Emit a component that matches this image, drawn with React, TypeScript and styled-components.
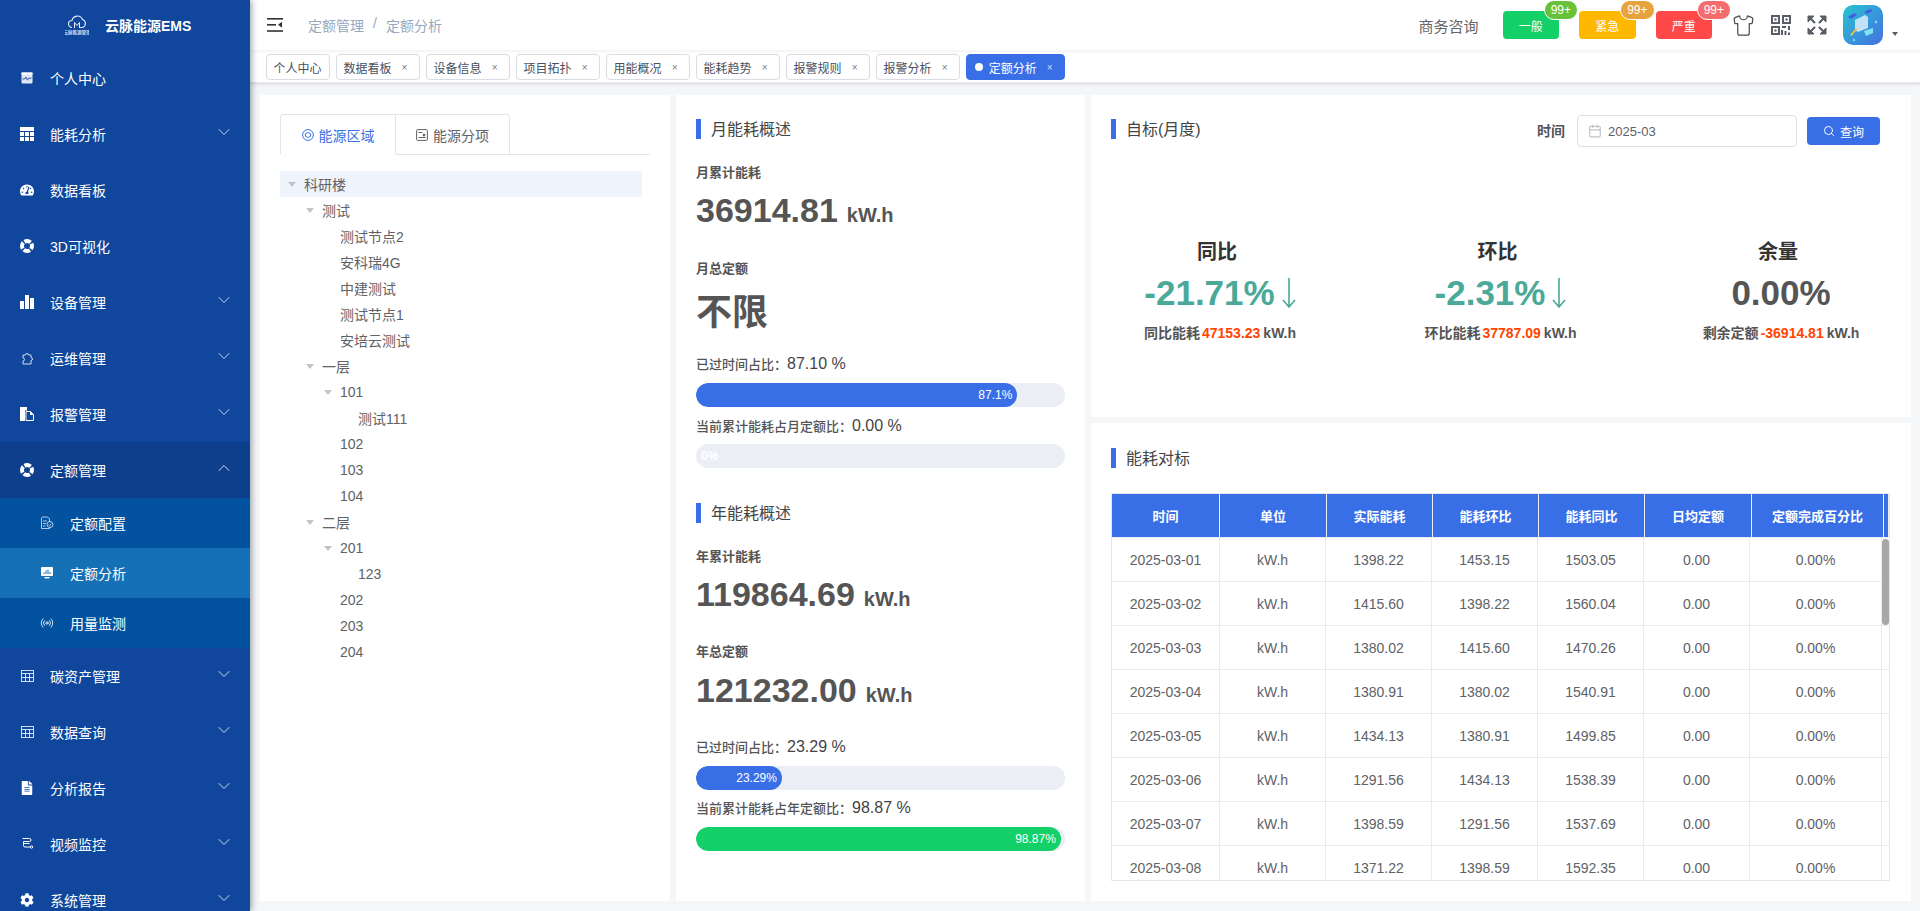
import React from "react";
import styled, { createGlobalStyle } from "styled-components";
import { Calendar, ChevronDown, ChevronUp, Radio, Search, Shirt } from "lucide-react";
import { FaCog, FaFileAlt, FaTachometerAlt } from "react-icons/fa";

const BLUE = "#386fe7";

const GlobalStyle = createGlobalStyle`
  html, body, #root { margin: 0; padding: 0; width: 100%; height: 100%; }
  body {
    overflow: hidden;
    background: #f5f6f7;
    font-family: "Liberation Sans", "Noto Sans CJK SC", sans-serif;
    font-size: 14px;
    color: #606266;
  }
  * { box-sizing: border-box; }
`;

const Layout = styled.div`
  display: flex;
  width: 1920px;
  height: 911px;
  overflow: hidden;
`;

/* sidebar */
const Sidebar = styled.aside`
  flex: 0 0 250px;
  height: 911px;
  overflow: hidden;
  background: #10469b;
  color: #fff;
  box-shadow: 2px 0 6px rgba(0, 21, 41, 0.35);
  position: relative;
  z-index: 2;
`;
const LogoRow = styled.div`
  display: flex;
  align-items: center;
  height: 50px;
  padding-left: 65px;
  font-weight: 700;
  font-size: 14px;
  gap: 16px;
`;
const NavRow = styled.div<{ $open?: boolean }>`
  display: flex;
  align-items: center;
  height: 56px;
  padding: 0 20px;
  background: ${(p) => (p.$open ? "#0e3f8d" : "transparent")};
`;
const SubRow = styled.div<{ $active?: boolean }>`
  display: flex;
  align-items: center;
  height: 50px;
  padding-left: 40px;
  background: ${(p) => (p.$active ? "#1570b5" : "#03529f")};
`;
const NavIcon = styled.span`
  flex: 0 0 14px;
  width: 14px;
  height: 14px;
  margin-right: 16px;
  display: flex;
  align-items: center;
  justify-content: center;
  color: #fff;
`;
const NavText = styled.span`
  flex: 1;
  font-size: 14px;
`;
const NavArrow = styled.span`
  display: flex;
  margin-top: -4px;
  margin-right: -4px;
  color: #cfdaec;
`;

/* right side */
const Main = styled.div`
  flex: 1;
  min-width: 0;
  display: flex;
  flex-direction: column;
`;
const Header = styled.header`
  display: flex;
  align-items: center;
  height: 50px;
  padding: 0 20px 0 17px;
  background: #fff;
  box-shadow: 0 1px 4px rgba(0, 21, 41, 0.08);
  position: relative;
  z-index: 1;
`;
const Crumbs = styled.div`
  display: flex;
  gap: 9px;
  margin-left: 25px;
  color: #97a8be;
  font-size: 14px;
`;
const Tools = styled.div`
  margin-left: auto;
  display: flex;
  align-items: center;
`;
const Consult = styled.span`
  font-size: 15px;
  color: #666;
  margin-right: 24px;
`;
const LevelBtn = styled.div<{ $bg: string }>`
  position: relative;
  width: 56.5px;
  height: 28px;
  margin-right: 20px;
  border-radius: 4px;
  background: ${(p) => p.$bg};
  color: #fff;
  font-size: 12px;
  display: flex;
  align-items: center;
  justify-content: center;
`;
const Badge = styled.span<{ $bg: string }>`
  position: absolute;
  top: -11px;
  right: -19px;
  height: 20px;
  padding: 0 6px;
  border-radius: 10px;
  border: 1px solid #fff;
  background: ${(p) => p.$bg};
  color: #fff;
  font-size: 12px;
  line-height: 18px;
  white-space: nowrap;
`;
const ToolIcon = styled.span`
  display: flex;
  margin-right: 16px;
  color: #4a4e55;
`;
const Avatar = styled.div`
  width: 40px;
  height: 40px;
  border-radius: 10px;
  overflow: hidden;
`;
const Caret = styled.span`
  margin: 18px 2px 0 9px;
  width: 0;
  height: 0;
  border-left: 3.5px solid transparent;
  border-right: 3.5px solid transparent;
  border-top: 4px solid #5a5e66;
`;
const TagBar = styled.div`
  display: flex;
  align-items: flex-start;
  gap: 6px;
  height: 33px;
  padding: 4px 0 0 15.5px;
  background: #fff;
  border-bottom: 1px solid #e6e8ec;
  box-shadow: 0 1px 3px rgba(0, 0, 0, 0.12);
`;
const Tag = styled.div<{ $active?: boolean }>`
  display: flex;
  align-items: center;
  height: 26px;
  padding: 0 7px;
  font-size: 12px;
  border-radius: 4px;
  border: 1px solid ${(p) => (p.$active ? BLUE : "#d8dce5")};
  background: ${(p) => (p.$active ? BLUE : "#fff")};
  color: ${(p) => (p.$active ? "#fff" : "#495060")};
`;
const TagDot = styled.span`
  width: 8px;
  height: 8px;
  border-radius: 50%;
  background: #fff;
  margin: 0 6px 0 1px;
`;
const TagClose = styled.span`
  width: 14px;
  margin-left: 6px;
  text-align: center;
  font-size: 10px;
  opacity: 0.75;
`;
const Content = styled.main`
  flex: 1;
  min-height: 0;
  display: grid;
  grid-template-columns: 410px 409px 819px;
  gap: 6px;
  padding: 12px 10px 10px;
`;
const Panel = styled.section`
  background: #fff;
  min-height: 0;
`;
const TreePanel = styled(Panel)`
  padding: 19px 20px;
`;
const OverviewPanel = styled(Panel)`
  padding: 24px 20px 0;
`;
const RightColumn = styled.div`
  display: grid;
  grid-template-rows: 322px 478px;
  gap: 6px;
  min-height: 0;
`;

/* tree */
const TabHead = styled.div`
  display: flex;
  height: 41px;
  border-bottom: 1px solid #dfe4ed;
`;
const Tab = styled.div<{ $active?: boolean; $w: number }>`
  width: ${(p) => p.$w}px;
  height: 41px;
  display: flex;
  align-items: center;
  justify-content: center;
  gap: 5px;
  font-size: 14px;
  color: ${(p) => (p.$active ? BLUE : "#606266")};
  background: #fff;
  border: 1px solid #dfe4ed;
  border-left-width: ${(p) => (p.$active ? 1 : 0)}px;
  border-bottom-color: ${(p) => (p.$active ? "#fff" : "#dfe4ed")};
  border-radius: ${(p) => (p.$active ? "4px 0 0 0" : "0 4px 0 0")};
`;
const Tree = styled.div`
  width: 362px;
  margin-top: 16px;
`;
const TreeRow = styled.div<{ $level: number; $selected?: boolean }>`
  display: flex;
  align-items: center;
  height: 26px;
  padding-left: ${(p) => p.$level * 18}px;
  background: ${(p) => (p.$selected ? "#f0f4fc" : "transparent")};
  color: #606266;
  font-size: 14px;
`;
const TreeArrow = styled.span<{ $hidden?: boolean }>`
  flex: 0 0 24px;
  display: flex;
  justify-content: center;
  &::before {
    content: "";
    display: ${(p) => (p.$hidden ? "none" : "block")};
    border-left: 4px solid transparent;
    border-right: 4px solid transparent;
    border-top: 5px solid #c0c4cc;
  }
`;

/* overview */
const Title = styled.h3<{ $mt?: number }>`
  display: flex;
  align-items: center;
  height: 20px;
  margin: ${(p) => p.$mt ?? 0}px 0 0;
  padding: 0 0 2px 10px;
  border-left: 5px solid ${BLUE};
  font-size: 16px;
  font-weight: 400;
  color: #444;
`;
const StatLabel = styled.div<{ $mt: number; $light?: boolean }>`
  height: 20px;
  line-height: 20px;
  margin-top: ${(p) => p.$mt}px;
  font-size: 13px;
  font-weight: ${(p) => (p.$light ? 500 : 700)};
  color: #555;
`;
const BigValue = styled.div<{ $mt: number; $h?: number; $size?: number }>`
  height: ${(p) => p.$h ?? 44}px;
  line-height: ${(p) => p.$h ?? 44}px;
  margin-top: ${(p) => p.$mt}px;
  font-size: ${(p) => p.$size ?? 34}px;
  font-weight: 700;
  color: #555;
`;
const Unit = styled.span`
  font-size: 20px;
  margin-left: 9px;
`;
const RatioNum = styled.span`
  font-size: 16px;
  font-weight: 400;
  color: #444;
`;
const Track = styled.div<{ $mt: number }>`
  height: 24px;
  margin-top: ${(p) => p.$mt}px;
  border-radius: 12px;
  background: #ebeef5;
  overflow: hidden;
`;
const Fill = styled.div<{ $color: string }>`
  height: 100%;
  border-radius: 12px;
  background: ${(p) => p.$color};
  color: #fff;
  font-size: 12px;
  line-height: 24px;
  text-align: right;
  padding-right: 5px;
  white-space: nowrap;
`;
const ZeroText = styled.div`
  padding-left: 5px;
  color: #fff;
  font-size: 12px;
  font-weight: 700;
  line-height: 24px;
`;

/* target */
const TargetHead = styled.div`
  display: flex;
  align-items: flex-start;
  height: 52px;
  padding: 20px 31px 0 20px;
`;
const TargetTitle = styled(Title)`
  margin-top: 4px;
  flex: 1;
`;
const TimeLabel = styled.span`
  font-size: 14px;
  font-weight: 700;
  color: #555;
  line-height: 32px;
  margin-right: 12px;
`;
const DateInput = styled.div`
  display: flex;
  align-items: center;
  width: 220px;
  height: 32px;
  padding-left: 10px;
  gap: 6px;
  border: 1px solid #dcdfe6;
  border-radius: 4px;
  font-size: 13px;
  color: #606266;
`;
const QueryButton = styled.div`
  display: flex;
  align-items: center;
  justify-content: center;
  gap: 5px;
  width: 73px;
  height: 28px;
  margin: 2px 0 0 10px;
  border-radius: 4px;
  background: ${BLUE};
  color: #fff;
  font-size: 12px;
`;
const TargetGrid = styled.div`
  display: grid;
  grid-template-columns: repeat(3, 240px);
  column-gap: 40.5px;
  margin: 90px 0 0 9px;
`;
const TargetCol = styled.div`
  display: flex;
  flex-direction: column;
  align-items: center;
`;
const TargetName = styled.div`
  height: 28px;
  line-height: 28px;
  margin-top: 1px;
  padding-right: 6px;
  font-size: 20px;
  font-weight: 700;
  color: #333;
`;
const TargetValue = styled.div<{ $color: string }>`
  display: flex;
  align-items: center;
  gap: 7px;
  height: 44px;
  margin-top: 5px;
  font-size: 35px;
  font-weight: 700;
  color: ${(p) => p.$color};
`;
const TargetSub = styled.div`
  height: 20px;
  line-height: 20px;
  margin-top: 8px;
  font-size: 14px;
  font-weight: 700;
  color: #555;
  white-space: nowrap;
`;
const Orange = styled.span`
  color: #ff4500;
  margin: 0 3px 0 2px;
`;

/* table */
const TablePanel = styled(Panel)`
  padding: 25px 21px 0 20px;
`;
const TableBox = styled.div`
  width: 779px;
  height: 388px;
  margin-top: 25px;
  border: 1px solid #e4e7ed;
`;
const HeadRow = styled.div`
  display: grid;
  grid-template-columns: 108px 107px 106px 106px 106px 107px 132px 1fr;
  height: 44px;
  background: ${BLUE};
  border-bottom: 1px solid #ebeef5;
`;
const HeadCell = styled.div`
  display: flex;
  align-items: center;
  justify-content: center;
  border-right: 1px solid #ebeef5;
  color: #fff;
  font-size: 13px;
  font-weight: 700;
`;
const TableBody = styled.div`
  position: relative;
  height: 342px;
  overflow: hidden;
`;
const ScrollThumb = styled.div`
  position: absolute;
  top: 1px;
  right: 0;
  width: 7px;
  height: 86px;
  border-radius: 4px;
  background: #a8a8a8;
`;
const BodyRow = styled.div`
  display: grid;
  grid-template-columns: 108px 106px 106px 106px 106px 106px 132px;
  height: 44px;
  border-bottom: 1px solid #e8ebf1;
`;
const BodyCell = styled.div`
  display: flex;
  align-items: center;
  justify-content: center;
  border-right: 1px solid #e8ebf1;
  color: #606266;
  font-size: 14px;
`;

/* drawn icons */
const PulseIcon = () => (
  <svg width="12" height="12" viewBox="0 0 12 12">
    <rect x="0.5" y="0.5" width="11" height="11" rx="1" fill="#dfe7f5" />
    <rect x="0.5" y="0.5" width="11" height="2" fill="#fff" />
    <path d="M1.5 7h2.2l1.2-2 1.6 3.2 1.3-2H10.5" fill="none" stroke="#10469b" strokeWidth="0.9" />
  </svg>
);
const GridIcon = () => (
  <svg width="14" height="14" viewBox="0 0 14 14" fill="#fff">
    <rect x="0" y="0" width="14" height="4" />
    <rect x="0" y="5" width="4" height="4" />
    <rect x="5" y="5" width="4" height="4" />
    <rect x="10" y="5" width="4" height="4" />
    <rect x="0" y="10" width="4" height="4" />
    <rect x="5" y="10" width="4" height="4" />
    <rect x="10" y="10" width="4" height="4" />
  </svg>
);
const RingIcon = () => (
  <svg width="14" height="14" viewBox="0 0 14 14" fill="none">
    <circle cx="7" cy="7" r="5" stroke="#fff" strokeWidth="4" strokeDasharray="6.45 1.4" strokeDashoffset="3.22" />
  </svg>
);
const BarsIcon = () => (
  <svg width="14" height="14" viewBox="0 0 14 14" fill="#fff">
    <rect x="0" y="6" width="4" height="8" />
    <rect x="5" y="0" width="4" height="14" />
    <rect x="10" y="3" width="4" height="11" />
  </svg>
);
const PuzzleIcon = () => (
  <svg width="13" height="13" viewBox="0 0 13 13" fill="none" stroke="#e8eef8" strokeWidth="0.9">
    <path d="M2 3h2.5a1.5 1.5 0 0 1 3 0H10v2.5a1.5 1.5 0 0 1 0 3V12H2V9a1.5 1.5 0 0 0 0-3z" />
  </svg>
);
const DocsIcon = () => (
  <svg width="14" height="14" viewBox="0 0 14 14">
    <path d="M0 0h7v3.5H5V14H0z" fill="#fff" />
    <path d="M6 4.500h4.500L13.500 7.500v6H6z" fill="none" stroke="#fff" strokeWidth="1" />
    <path d="M10 4.500V8h3.500" fill="#fff" />
  </svg>
);
const DocCheckIcon = () => (
  <svg width="14" height="14" viewBox="0 0 14 14" fill="none" stroke="#e3ebf7" strokeWidth="0.8">
    <path d="M2.500 1h5l2 2v3M9.500 11.500v1h-8V2L2.500 1" />
    <path d="M3 5h4M3 7.500h3M3 10h2.500" />
    <circle cx="10" cy="8.500" r="3" />
    <path d="M8.700 8.500l1 1 1.600-1.800" />
  </svg>
);
const MonitorIcon = () => (
  <svg width="14" height="14" viewBox="0 0 14 14">
    <rect x="1" y="1" width="12" height="9" rx="0.8" fill="#fff" />
    <path d="M4 8V6.500M6 8V4.500M8 8V3.500M10 8V6" stroke="#1570b5" strokeWidth="1" />
    <rect x="4.500" y="11" width="5" height="1.400" fill="#fff" />
  </svg>
);
const TableIcon = () => (
  <svg width="13" height="12" viewBox="0 0 13 12" fill="none" stroke="#e8eef8" strokeWidth="0.9">
    <rect x="0.500" y="0.500" width="12" height="11" />
    <path d="M0.500 3.500h12M0.500 7.500h12M4.500 3.500v8M8.500 3.500v8" />
  </svg>
);
const BranchIcon = () => (
  <svg width="14" height="14" viewBox="0 0 14 14" fill="none" stroke="#fff" strokeWidth="1">
    <path d="M2.500 1.500h7a1.500 1.500 0 0 1 0 3h-6v4a1.500 1.500 0 0 0 1.500 1.500h5" />
    <path d="M3.500 6.500h6" />
    <circle cx="11.500" cy="10" r="1.200" />
  </svg>
);
const MenuToggle = () => (
  <svg width="16" height="14" viewBox="0 0 16 14" fill="#333">
    <rect x="0" y="0" width="16" height="1.600" />
    <rect x="0" y="6" width="9" height="1.600" />
    <rect x="0" y="12.200" width="16" height="1.600" />
    <path d="M11 6.800l4-3v6z" />
  </svg>
);
const QrIcon = () => (
  <svg width="20" height="20" viewBox="0 0 20 20" fill="none" stroke="#5a5e66" strokeWidth="2">
    <rect x="1" y="1" width="7" height="7" />
    <rect x="12" y="1" width="7" height="7" />
    <rect x="1" y="12" width="7" height="7" />
    <rect x="3.800" y="3.800" width="1.400" height="1.400" fill="#5a5e66" strokeWidth="0.6" />
    <rect x="14.800" y="3.800" width="1.400" height="1.400" fill="#5a5e66" strokeWidth="0.6" />
    <rect x="3.800" y="14.800" width="1.400" height="1.400" fill="#5a5e66" strokeWidth="0.6" />
    <path d="M11 12h4M18 11v4M11 15v5M14.500 16v4M18 17.500V20" />
  </svg>
);
const FullIcon = () => (
  <svg width="20" height="20" viewBox="0 0 20 20" fill="#5a5e66" stroke="#5a5e66">
    <path d="M1 1h6L1 7z" />
    <path d="M19 1h-6l6 6z" />
    <path d="M1 19h6l-6-6z" />
    <path d="M19 19h-6l6-6z" />
    <path d="M3 3l5 5M17 3l-5 5M3 17l5-5M17 17l-5-5" strokeWidth="2.200" />
  </svg>
);
const AvatarArt = () => (
  <svg width="40" height="40" viewBox="0 0 40 40">
    <defs>
      <linearGradient id="avatarBg" x1="0" y1="0" x2="1" y2="1">
        <stop offset="0" stopColor="#28c4cf" />
        <stop offset="1" stopColor="#4470e2" />
      </linearGradient>
    </defs>
    <rect width="40" height="40" fill="url(#avatarBg)" />
    <path d="M5 12l6-4 3 2-6 4zM21 7l6-3 3 2-6 3z" fill="#3f5ee0" />
    <path d="M12 15l10-5 3 2v11l-10 4-3-2z" fill="#cfe9fb" opacity="0.9" />
    <path d="M7 30l6-7 1.500 1-6 7z" fill="#f3c34a" />
    <path d="M21 26l9-3v5l-7 3z" fill="#7fe3ee" />
    <circle cx="11" cy="35" r="1.200" fill="#7fe3ee" />
    <circle cx="33" cy="17" r="1.200" fill="#9fd0ff" />
  </svg>
);
const LogoIcon = () => (
  <svg width="24" height="24" viewBox="0 0 24 24">
    <path
      d="M7 14.500a3.500 3.500 0 0 1 0-7 5.500 5.500 0 0 1 10.500-1 4.200 4.200 0 0 1 0 8h-3.500"
      fill="none"
      stroke="#e8eef8"
      strokeWidth="1.100"
    />
    <path d="M9.500 15V9.500l2.500 3 2.500-3V15" fill="none" stroke="#e8eef8" strokeWidth="1" />
    <text x="12" y="21" textAnchor="middle" fontSize="4.500" fill="#cdd9ee">
      云脉能源管理
    </text>
  </svg>
);
const RingTabIcon = () => (
  <svg width="12" height="12" viewBox="0 0 12 12" fill="none" stroke="currentColor" strokeWidth="1">
    <circle cx="6" cy="6" r="5.400" />
    <rect x="3.200" y="3.800" width="5.600" height="4.400" rx="2.200" />
  </svg>
);
const PictureTabIcon = () => (
  <svg width="12" height="12" viewBox="0 0 12 12" fill="none" stroke="currentColor" strokeWidth="1">
    <rect x="0.600" y="0.600" width="10.800" height="10.800" rx="1" />
    <path d="M2.500 3.500h4M2.500 8.500h7" />
    <circle cx="8" cy="6" r="1" fill="currentColor" />
  </svg>
);
const DownArrow = () => (
  <svg width="14" height="30" viewBox="0 0 14 30" fill="none" stroke="#4aa998" strokeWidth="1.600">
    <path d="M7 0v29M1 22l6 7 6-7" />
  </svg>
);

const menuBefore = [
  { label: "个人中心", icon: <PulseIcon /> },
  { label: "能耗分析", icon: <GridIcon />, arrow: true },
  { label: "数据看板", icon: <FaTachometerAlt size={14} /> },
  { label: "3D可视化", icon: <RingIcon /> },
  { label: "设备管理", icon: <BarsIcon />, arrow: true },
  { label: "运维管理", icon: <PuzzleIcon />, arrow: true },
  { label: "报警管理", icon: <DocsIcon />, arrow: true },
];
const subMenu = [
  { label: "定额配置", icon: <DocCheckIcon /> },
  { label: "定额分析", icon: <MonitorIcon />, active: true },
  { label: "用量监测", icon: <Radio size={14} strokeWidth={1.4} /> },
];
const menuAfter = [
  { label: "碳资产管理", icon: <TableIcon /> },
  { label: "数据查询", icon: <TableIcon /> },
  { label: "分析报告", icon: <FaFileAlt size={14} /> },
  { label: "视频监控", icon: <BranchIcon /> },
  { label: "系统管理", icon: <FaCog size={14} /> },
];
const tags = ["数据看板", "设备信息", "项目拓扑", "用能概况", "能耗趋势", "报警规则", "报警分析"];
const treeData: { label: string; level: number; leaf?: boolean; selected?: boolean }[] = [
  { label: "科研楼", level: 0, selected: true },
  { label: "测试", level: 1 },
  { label: "测试节点2", level: 2, leaf: true },
  { label: "安科瑞4G", level: 2, leaf: true },
  { label: "中建测试", level: 2, leaf: true },
  { label: "测试节点1", level: 2, leaf: true },
  { label: "安培云测试", level: 2, leaf: true },
  { label: "一层", level: 1 },
  { label: "101", level: 2 },
  { label: "测试111", level: 3, leaf: true },
  { label: "102", level: 2, leaf: true },
  { label: "103", level: 2, leaf: true },
  { label: "104", level: 2, leaf: true },
  { label: "二层", level: 1 },
  { label: "201", level: 2 },
  { label: "123", level: 3, leaf: true },
  { label: "202", level: 2, leaf: true },
  { label: "203", level: 2, leaf: true },
  { label: "204", level: 2, leaf: true },
];
const heads = ["时间", "单位", "实际能耗", "能耗环比", "能耗同比", "日均定额", "定额完成百分比", ""];
const rows = [
  ["2025-03-01", "1398.22", "1453.15", "1503.05"],
  ["2025-03-02", "1415.60", "1398.22", "1560.04"],
  ["2025-03-03", "1380.02", "1415.60", "1470.26"],
  ["2025-03-04", "1380.91", "1380.02", "1540.91"],
  ["2025-03-05", "1434.13", "1380.91", "1499.85"],
  ["2025-03-06", "1291.56", "1434.13", "1538.39"],
  ["2025-03-07", "1398.59", "1291.56", "1537.69"],
  ["2025-03-08", "1371.22", "1398.59", "1592.35"],
];

function App() {
  return (
    <Layout>
      <GlobalStyle />
      <Sidebar>
        <LogoRow>
          <LogoIcon />
          <span>云脉能源EMS</span>
        </LogoRow>
        {menuBefore.map((m) => (
          <NavRow key={m.label}>
            <NavIcon>{m.icon}</NavIcon>
            <NavText>{m.label}</NavText>
            {m.arrow && (
              <NavArrow>
                <ChevronDown size={20} strokeWidth={1.2} />
              </NavArrow>
            )}
          </NavRow>
        ))}
        <NavRow $open>
          <NavIcon>
            <RingIcon />
          </NavIcon>
          <NavText>定额管理</NavText>
          <NavArrow>
            <ChevronUp size={20} strokeWidth={1.2} />
          </NavArrow>
        </NavRow>
        {subMenu.map((m) => (
          <SubRow key={m.label} $active={m.active}>
            <NavIcon>{m.icon}</NavIcon>
            <NavText>{m.label}</NavText>
          </SubRow>
        ))}
        {menuAfter.map((m) => (
          <NavRow key={m.label}>
            <NavIcon>{m.icon}</NavIcon>
            <NavText>{m.label}</NavText>
            <NavArrow>
              <ChevronDown size={20} strokeWidth={1.2} />
            </NavArrow>
          </NavRow>
        ))}
      </Sidebar>
      <Main>
        <Header>
          <MenuToggle />
          <Crumbs>
            <span>定额管理</span>
            <span>/</span>
            <span>定额分析</span>
          </Crumbs>
          <Tools>
            <Consult>商务咨询</Consult>
            <LevelBtn $bg="#13d168">
              一般<Badge $bg="#67c23a">99+</Badge>
            </LevelBtn>
            <LevelBtn $bg="#ffb800">
              紧急<Badge $bg="#e6a23c">99+</Badge>
            </LevelBtn>
            <LevelBtn $bg="#ff4949">
              严重<Badge $bg="#f56c6c">99+</Badge>
            </LevelBtn>
            <ToolIcon>
              <Shirt size={23} strokeWidth={1.3} />
            </ToolIcon>
            <ToolIcon>
              <QrIcon />
            </ToolIcon>
            <ToolIcon>
              <FullIcon />
            </ToolIcon>
            <Avatar>
              <AvatarArt />
            </Avatar>
            <Caret />
          </Tools>
        </Header>
        <TagBar>
          <Tag>个人中心</Tag>
          {tags.map((t) => (
            <Tag key={t}>
              {t}
              <TagClose>×</TagClose>
            </Tag>
          ))}
          <Tag $active>
            <TagDot />
            定额分析
            <TagClose>×</TagClose>
          </Tag>
        </TagBar>
        <Content>
          <TreePanel>
            <TabHead>
              <Tab $active $w={116}>
                <RingTabIcon />
                能源区域
              </Tab>
              <Tab $w={114}>
                <PictureTabIcon />
                能源分项
              </Tab>
            </TabHead>
            <Tree>
              {treeData.map((n) => (
                <TreeRow key={n.label} $level={n.level} $selected={n.selected}>
                  <TreeArrow $hidden={n.leaf} />
                  {n.label}
                </TreeRow>
              ))}
            </Tree>
          </TreePanel>
          <OverviewPanel>
            <Title>月能耗概述</Title>
            <StatLabel $mt={24}>月累计能耗</StatLabel>
            <BigValue $mt={5}>
              36914.81<Unit>kW.h</Unit>
            </BigValue>
            <StatLabel $mt={27}>月总定额</StatLabel>
            <BigValue $mt={9} $h={50} $size={36}>
              不限
            </BigValue>
            <StatLabel $mt={16} $light>
              已过时间占比：<RatioNum>87.10 %</RatioNum>
            </StatLabel>
            <Track $mt={9}>
              <Fill $color={BLUE} style={{ width: "87.1%" }}>
                87.1%
              </Fill>
            </Track>
            <StatLabel $mt={9} $light>
              当前累计能耗占月定额比：<RatioNum>0.00 %</RatioNum>
            </StatLabel>
            <Track $mt={8}>
              <ZeroText>0%</ZeroText>
            </Track>
            <Title $mt={35}>年能耗概述</Title>
            <StatLabel $mt={24}>年累计能耗</StatLabel>
            <BigValue $mt={5}>
              119864.69<Unit>kW.h</Unit>
            </BigValue>
            <StatLabel $mt={26}>年总定额</StatLabel>
            <BigValue $mt={6}>
              121232.00<Unit>kW.h</Unit>
            </BigValue>
            <StatLabel $mt={25} $light>
              已过时间占比：<RatioNum>23.29 %</RatioNum>
            </StatLabel>
            <Track $mt={9}>
              <Fill $color={BLUE} style={{ width: "23.29%" }}>
                23.29%
              </Fill>
            </Track>
            <StatLabel $mt={8} $light>
              当前累计能耗占年定额比：<RatioNum>98.87 %</RatioNum>
            </StatLabel>
            <Track $mt={9}>
              <Fill $color="#13d168" style={{ width: "98.87%" }}>
                98.87%
              </Fill>
            </Track>
          </OverviewPanel>
          <RightColumn>
            <Panel>
              <TargetHead>
                <TargetTitle>自标(月度)</TargetTitle>
                <TimeLabel>时间</TimeLabel>
                <DateInput>
                  <Calendar size={14} color="#c0c4cc" />
                  2025-03
                </DateInput>
                <QueryButton>
                  <Search size={12} />
                  查询
                </QueryButton>
              </TargetHead>
              <TargetGrid>
                <TargetCol>
                  <TargetName>同比</TargetName>
                  <TargetValue $color="#4aa998">
                    -21.71%
                    <DownArrow />
                  </TargetValue>
                  <TargetSub>
                    同比能耗<Orange>47153.23</Orange>kW.h
                  </TargetSub>
                </TargetCol>
                <TargetCol>
                  <TargetName>环比</TargetName>
                  <TargetValue $color="#4aa998">
                    -2.31%
                    <DownArrow />
                  </TargetValue>
                  <TargetSub>
                    环比能耗<Orange>37787.09</Orange>kW.h
                  </TargetSub>
                </TargetCol>
                <TargetCol>
                  <TargetName>余量</TargetName>
                  <TargetValue $color="#555">0.00%</TargetValue>
                  <TargetSub>
                    剩余定额<Orange>-36914.81</Orange>kW.h
                  </TargetSub>
                </TargetCol>
              </TargetGrid>
            </Panel>
            <TablePanel>
              <Title>能耗对标</Title>
              <TableBox>
                <HeadRow>
                  {heads.map((h) => (
                    <HeadCell key={h}>{h}</HeadCell>
                  ))}
                </HeadRow>
                <TableBody>
                  {rows.map(([date, actual, ring, same]) => (
                    <BodyRow key={date}>
                      <BodyCell>{date}</BodyCell>
                      <BodyCell>kW.h</BodyCell>
                      <BodyCell>{actual}</BodyCell>
                      <BodyCell>{ring}</BodyCell>
                      <BodyCell>{same}</BodyCell>
                      <BodyCell>0.00</BodyCell>
                      <BodyCell>0.00%</BodyCell>
                    </BodyRow>
                  ))}
                  <ScrollThumb />
                </TableBody>
              </TableBox>
            </TablePanel>
          </RightColumn>
        </Content>
      </Main>
    </Layout>
  );
}

export default App;
